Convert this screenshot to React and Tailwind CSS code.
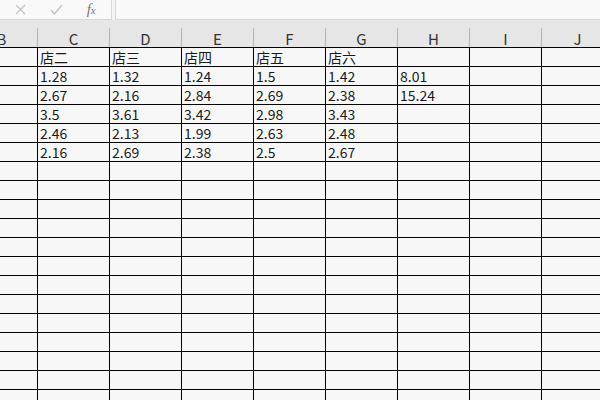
const cols = ['B', 'C', 'D', 'E', 'F', 'G', 'H', 'I', 'J'];

const data = [
  ['', '店二', '店三', '店四', '店五', '店六', '', '', ''],
  ['', '1.28', '1.32', '1.24', '1.5', '1.42', '8.01', '', ''],
  ['', '2.67', '2.16', '2.84', '2.69', '2.38', '15.24', '', ''],
  ['', '3.5', '3.61', '3.42', '2.98', '3.43', '', '', ''],
  ['', '2.46', '2.13', '1.99', '2.63', '2.48', '', '', ''],
  ['', '2.16', '2.69', '2.38', '2.5', '2.67', '', '', ''],
];

const rows = [...data, ...Array.from({ length: 14 }, () => Array(9).fill(''))];

function FormulaBar() {
  return (
    <div className="flex h-[20px] bg-[#f3f3f3]">
      <div className="w-[112px] h-[20px] border-r border-b border-[#d6d6d6] bg-[#f9f9f9] flex items-center">
        <span className="w-[42px] flex justify-center">
          <svg width="11" height="11" viewBox="0 0 11 11" fill="none" stroke="#c4c4c4" strokeWidth="1.3">
            <path d="M1 1 L10 10 M10 1 L1 10" />
          </svg>
        </span>
        <span className="w-[30px] flex justify-center">
          <svg width="13" height="11" viewBox="0 0 13 11" fill="none" stroke="#c4c4c4" strokeWidth="1.4">
            <path d="M1 6 L4.5 10 L12 1" />
          </svg>
        </span>
        <span className="w-[40px] text-center text-[15px] italic text-[#7a7a7a] font-['Liberation_Serif',serif] leading-[18px]">
          f<span className="text-[11px]">x</span>
        </span>
      </div>
      <div className="w-[3px]" />
      <div className="flex-1 h-[20px] border-l border-b border-[#d6d6d6] bg-[#f9f9f9]" />
    </div>
  );
}

export default function App() {
  return (
    <div className="w-[600px] h-[400px] overflow-hidden bg-[#f7f7f7] font-['Noto_Sans_CJK_SC','Noto_Sans',sans-serif] text-[#1a1a1a]">
      <FormulaBar />
      <div className="h-[28px] bg-[#e6e6e6] border-b border-black flex items-end -ml-[34px]">
        {cols.map((c) => (
          <div
            key={c}
            className="w-[72px] shrink-0 h-[19px] border-r border-[#b4b4b4] flex items-center justify-center pt-[2px] text-[15px] text-[#333] leading-none"
          >
            {c}
          </div>
        ))}
      </div>
      <div className="-ml-[34px]">
        {rows.map((r, i) => (
          <div key={i} className="flex h-[19px] border-b border-black">
            {r.map((v, j) => (
              <div
                key={j}
                className="w-[72px] shrink-0 border-r border-black pl-[2px] text-[14px] leading-[18px] whitespace-nowrap overflow-hidden"
              >
                {v}
              </div>
            ))}
          </div>
        ))}
      </div>
    </div>
  );
}
